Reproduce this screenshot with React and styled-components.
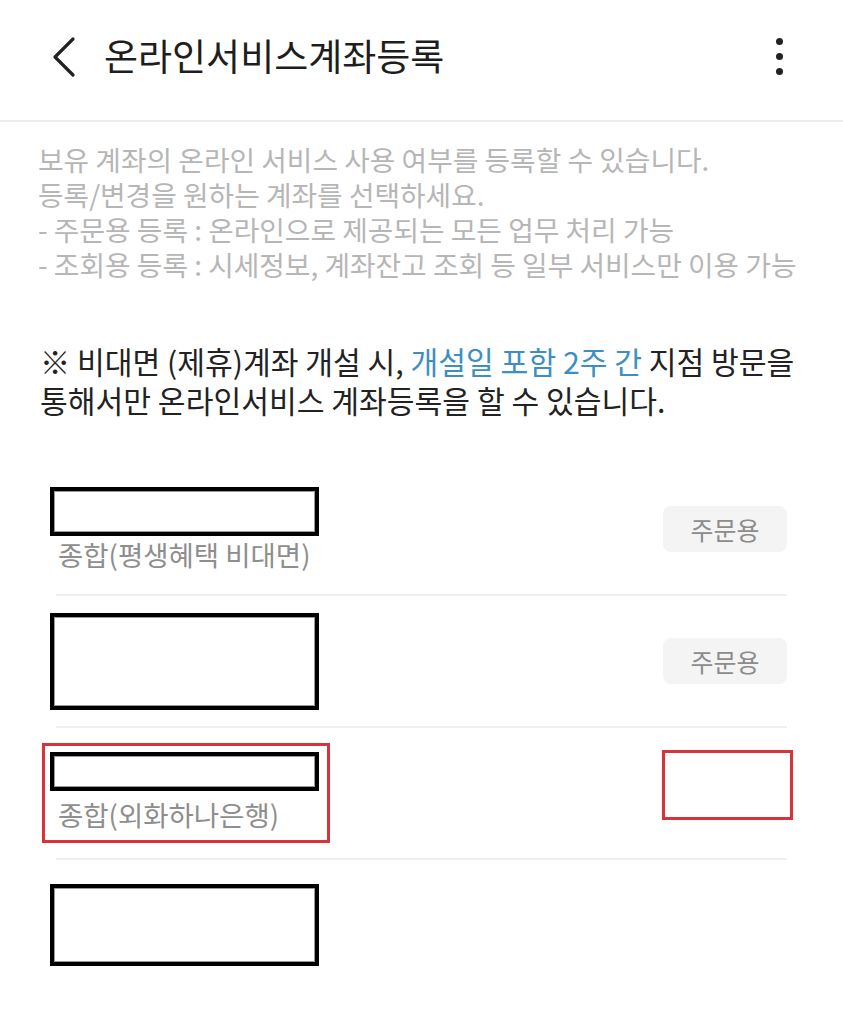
import React from 'react';
import styled, { createGlobalStyle } from 'styled-components';

const GlobalStyle = createGlobalStyle`
  html, body {
    margin: 0;
    padding: 0;
    background: #ffffff;
  }
  body {
    font-family: 'Noto Sans CJK KR', 'Noto Sans', sans-serif;
    color: #222222;
  }
`;

const accounts = [
  { id: 1, boxHeight: 49, label: '종합(평생혜택 비대면)', action: '주문용' },
  { id: 2, boxHeight: 97, action: '주문용' },
  { id: 3, boxHeight: 39, label: '종합(외화하나은행)', marked: true },
  { id: 4, boxHeight: 82 },
];

export default function App() {
  return (
    <Page>
      <GlobalStyle />
      <Header>
        <BackButton aria-label='뒤로'>
          <svg width='28' height='44' viewBox='0 0 28 44'>
            <path d='M23 4 L5 22 L23 40' fill='none' stroke='#222' strokeWidth='3.2' strokeLinecap='round' strokeLinejoin='round' />
          </svg>
        </BackButton>
        <Title>온라인서비스계좌등록</Title>
        <Kebab aria-label='더보기'>
          <Dot />
          <Dot />
          <Dot />
        </Kebab>
      </Header>

      <Description>
        보유 계좌의 온라인 서비스 사용 여부를 등록할 수 있습니다.
        <br />
        등록/변경을 원하는 계좌를 선택하세요.
        <br />- 주문용 등록 : 온라인으로 제공되는 모든 업무 처리 가능
        <br />- 조회용 등록 : 시세정보, 계좌잔고 조회 등 일부 서비스만 이용 가능
      </Description>

      <Notice>
        ※ 비대면 (제휴)계좌 개설 시, <Highlight>개설일 포함 2주 간</Highlight> 지점 방문을
        <br />
        통해서만 온라인서비스 계좌등록을 할 수 있습니다.
      </Notice>

      <AccountList>
        {accounts.map((acc) => {
          const info = (
            <>
              <Redacted $height={acc.boxHeight} />
              {acc.label && <AccountType>{acc.label}</AccountType>}
            </>
          );
          return (
            <AccountRow key={acc.id}>
              {acc.marked ? <MarkedInfo>{info}</MarkedInfo> : <AccountInfo>{info}</AccountInfo>}
              {acc.action && <TypeButton>{acc.action}</TypeButton>}
              {acc.marked && <MarkedSlot />}
            </AccountRow>
          );
        })}
      </AccountList>
    </Page>
  );
}

const Page = styled.div`
  width: 843px;
  min-height: 1024px;
  background: #fff;
`;

const Header = styled.header`
  display: flex;
  align-items: center;
  height: 120px;
  padding: 0 60px 0 50px;
  border-bottom: 2px solid #ececec;
`;

const BackButton = styled.div`
  display: flex;
  align-items: center;
  width: 28px;
  height: 44px;
  margin-top: -6px;
`;

const Title = styled.h1`
  margin: -10px 0 0 26px;
  font-size: 37px;
  font-weight: 400;
  letter-spacing: 0;
  color: #1e1e1e;
  flex: 1;
`;

const Kebab = styled.div`
  display: flex;
  flex-direction: column;
  align-items: center;
  gap: 8px;
  margin-top: -8px;
`;

const Dot = styled.span`
  width: 7px;
  height: 7px;
  border-radius: 50%;
  background: #222;
`;

const Description = styled.p`
  margin: 0;
  padding: 20px 38px 0;
  font-size: 27.8px;
  line-height: 35px;
  color: #b6b6b6;
  white-space: nowrap;
`;

const Notice = styled.p`
  margin: 60px 0 0;
  padding: 0 40px;
  font-size: 30.2px;
  line-height: 39px;
  color: #222;
  white-space: nowrap;
`;

const Highlight = styled.span`
  color: #3d8fc2;
`;

const AccountList = styled.ul`
  list-style: none;
  margin: 44px 56px 0;
  padding: 0;
`;

const AccountRow = styled.li`
  display: flex;
  align-items: center;
  justify-content: space-between;
  height: 130px;
  border-bottom: 2px solid #efefef;

  &:last-child {
    border-bottom: none;
  }
`;

const AccountInfo = styled.div`
  display: flex;
  flex-direction: column;
  margin-left: -6px;
`;

const MarkedInfo = styled.div`
  display: flex;
  flex-direction: column;
  gap: 5px;
  margin-left: -14px;
  padding: 6px 8px 8px 5px;
  border: 3px solid #d8323a;
`;

const Redacted = styled.div`
  width: 269px;
  height: ${(p) => p.$height}px;
  box-sizing: border-box;
  border: 4px solid #000;
  background: #fff;
  box-shadow: inset 0 0 0 1px #9a9a9a;
`;

const AccountType = styled.span`
  padding-left: 8px;
  font-size: 27.5px;
  line-height: 36px;
  color: #8e8e8e;
`;

const TypeButton = styled.button`
  width: 124px;
  height: 46px;
  border: none;
  border-radius: 8px;
  background: #f4f4f4;
  font-family: inherit;
  font-size: 25px;
  color: #8c8c8c;
`;

const MarkedSlot = styled.div`
  width: 131px;
  height: 70px;
  box-sizing: border-box;
  margin: 0 -6px 16px 0;
  border: 3px solid #d8323a;
`;
